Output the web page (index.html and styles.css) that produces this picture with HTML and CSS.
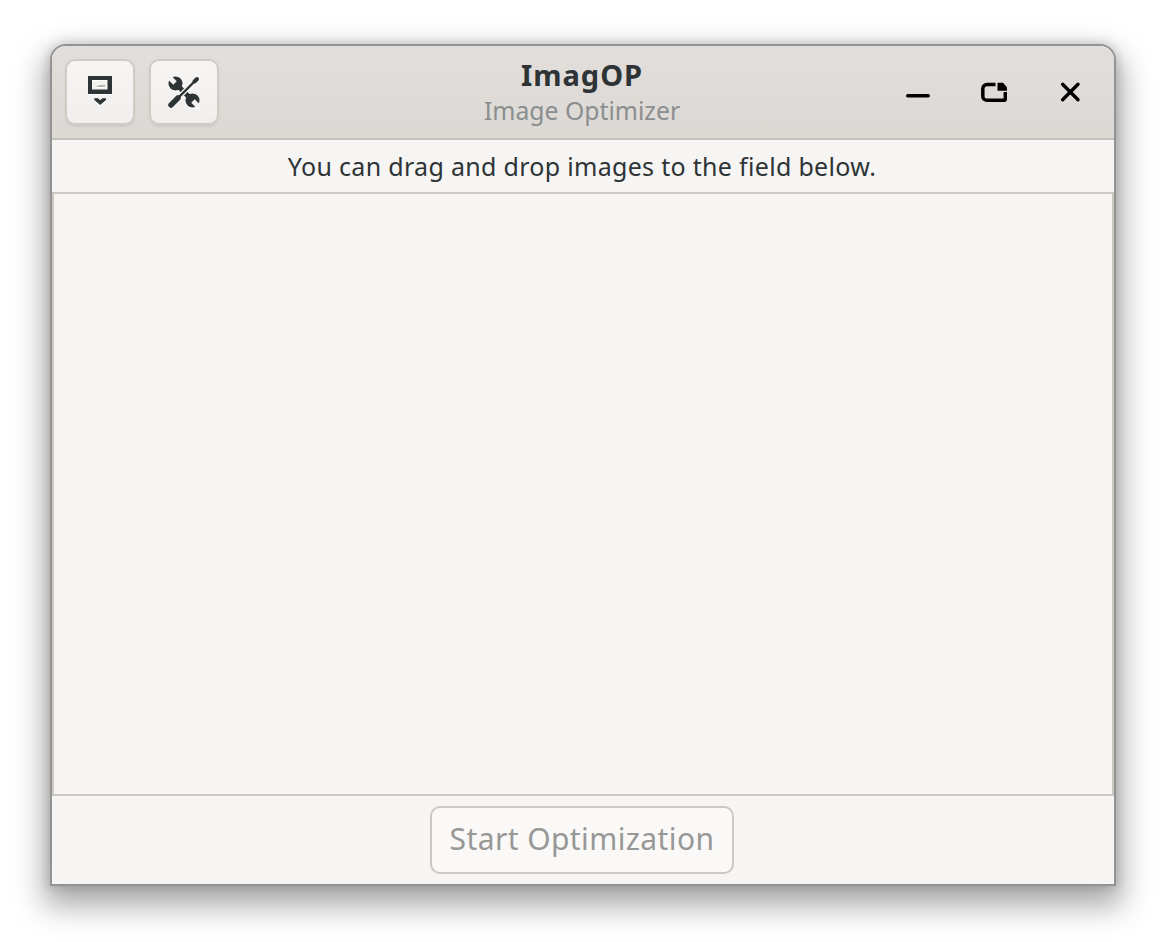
FILE: index.html
```html
<!DOCTYPE html>
<html lang="en">
<head>
<meta charset="utf-8">
<title>ImagOP</title>
<link rel="stylesheet" href="styles.css">
</head>
<body>
<div class="window">
  <header class="titlebar">
    <div class="tools">
      <button class="tool" aria-label="Menu">
        <svg class="icon" width="26" height="34" viewBox="0 0 26 34"><path fill="#2e3436" fill-rule="evenodd" d="M1 1h24v18H1zM5 5v9.500h15.500V5z"/><path fill="#b4b4b1" d="M8.500 12l4-2h5.500v2z"/><path fill="#2e3436" d="M7.300 23.300h3.700l2.200 2 2.100-2H19v1.700L13.200 30 7.300 25z"/></svg>
      </button>
      <button class="tool" aria-label="Preferences">
        <svg class="icon" width="32" height="32" viewBox="0 0 32 32">
          <g stroke="#2e3436" fill="#2e3436">
            <circle cx="7.500" cy="7.500" r="7" stroke="none"/>
            <circle cx="24.500" cy="24.500" r="7" stroke="none"/>
            <path stroke-width="5" d="M8 8l16 16"/>
          </g>
          <path fill="none" stroke="#f4f3f1" stroke-width="5" d="M7 7L-1 -1M25 25l8 8"/>
          <path fill="none" stroke="#f4f3f1" stroke-width="5" d="M8 24L24 8"/>
          <path fill="none" stroke="#2e3436" stroke-width="5.500" stroke-linecap="round" d="M3 29l7-7"/>
          <path fill="none" stroke="#2e3436" stroke-width="2.400" d="M8 24L27 5"/>
          <path fill="none" stroke="#2e3436" stroke-width="4" stroke-linecap="round" d="M26.500 5.500l2.500-2.500"/>
        </svg>
      </button>
    </div>
    <div class="titles">
      <h1 class="title">ImagOP</h1>
      <p class="subtitle">Image Optimizer</p>
    </div>
    <div class="controls">
      <span class="control"><svg width="26" height="26" viewBox="0 0 26 26"><path stroke="#000" stroke-width="3.600" stroke-linecap="round" d="M2.800 16.800h20.400"/></svg></span>
      <span class="control"><svg width="26" height="26" viewBox="0 0 26 26"><path fill="none" stroke="#000" stroke-width="3.500" d="M14.500 5.500H6A4.200 4.200 0 0 0 1.800 9.700v7.800A4 4 0 0 0 6 21.300h17a1.200 1.200 0 0 0 1.300-1.300v-7"/><path d="M16.500 3.700H22l4 4.500v3.500h-9.500z"/></svg></span>
      <span class="control"><svg width="26" height="26" viewBox="0 0 26 26"><path fill="none" stroke="#000" stroke-width="3.400" stroke-linecap="round" d="M5.600 5.300l15.400 15.400M21 5.300L5.600 20.700"/></svg></span>
    </div>
  </header>
  <p class="hint">You can drag and drop images to the field below.</p>
  <main class="dropzone"></main>
  <footer class="actions">
    <button class="start" disabled>Start Optimization</button>
  </footer>
</div>
</body>
</html>
```
FILE: styles.css
```css
* { box-sizing: border-box; }
html, body { margin: 0; height: 100%; background: #fff; }
body {
  padding: 44px 50px 56px;
  font-family: "Noto Sans", "Open Sans", sans-serif;
  color: #2e3436;
  overflow: hidden;
}
.window {
  height: 842px;
  display: flex;
  flex-direction: column;
  background: #f6f5f4;
  border: 2px solid #939393;
  border-radius: 16px 16px 0 0;
  box-shadow: 0 14px 30px 6px rgba(0, 0, 0, .34), 0 0 10px 2px rgba(0, 0, 0, .12);
  overflow: hidden;
}
.titlebar {
  height: 94px;
  flex: none;
  display: grid;
  grid-template-columns: 1fr auto 1fr;
  align-items: center;
  padding: 0 19px 0 13px;
  background: linear-gradient(#e1dedb, #dcd9d5);
  border-bottom: 2px solid #c6c1bb;
}
.tools { display: flex; gap: 14px; }
.tool {
  width: 70px;
  height: 66px;
  padding: 0;
  display: flex;
  align-items: center;
  justify-content: center;
  background: linear-gradient(#f6f5f4, #f1efed);
  border: 2px solid #d0cbc5;
  border-radius: 10px;
  box-shadow: 0 2px 2px rgba(0, 0, 0, .07);
}
.icon { filter: drop-shadow(0 1px 0 #fff); }
.titles { text-align: center; padding: 1px 0 0 4px; }
.title { margin: 0; font-size: 29px; letter-spacing: 1px; line-height: 37px; font-weight: 700; color: #2e3436; }
.subtitle { margin: 0; font-size: 24.750px; line-height: 36px; color: #8b8e8f; }
.controls { display: flex; justify-content: flex-end; gap: 26px; }
.control { width: 50px; height: 50px; display: flex; align-items: center; justify-content: center; }
.hint {
  margin: 0;
  height: 52px;
  flex: none;
  padding: 0 2px 1px 0;
  display: flex;
  align-items: center;
  justify-content: center;
  font-size: 25px;
  letter-spacing: .31px;
  color: #2e3436;
}
.dropzone {
  height: 604px;
  flex: none;
  border: 2px solid #cdc7c2;
  background: #f6f5f4;
}
.actions {
  flex: 1;
  display: flex;
  align-items: center;
  justify-content: center;
  padding-right: 2px;
}
.start {
  width: 304px;
  height: 68px;
  padding: 0 0 4px;
  font: 30px "Noto Sans", "Open Sans", sans-serif;
  letter-spacing: .4px;
  color: #979896;
  background: #faf9f8;
  border: 2px solid #cdc7c2;
  border-radius: 10px;
}
```
